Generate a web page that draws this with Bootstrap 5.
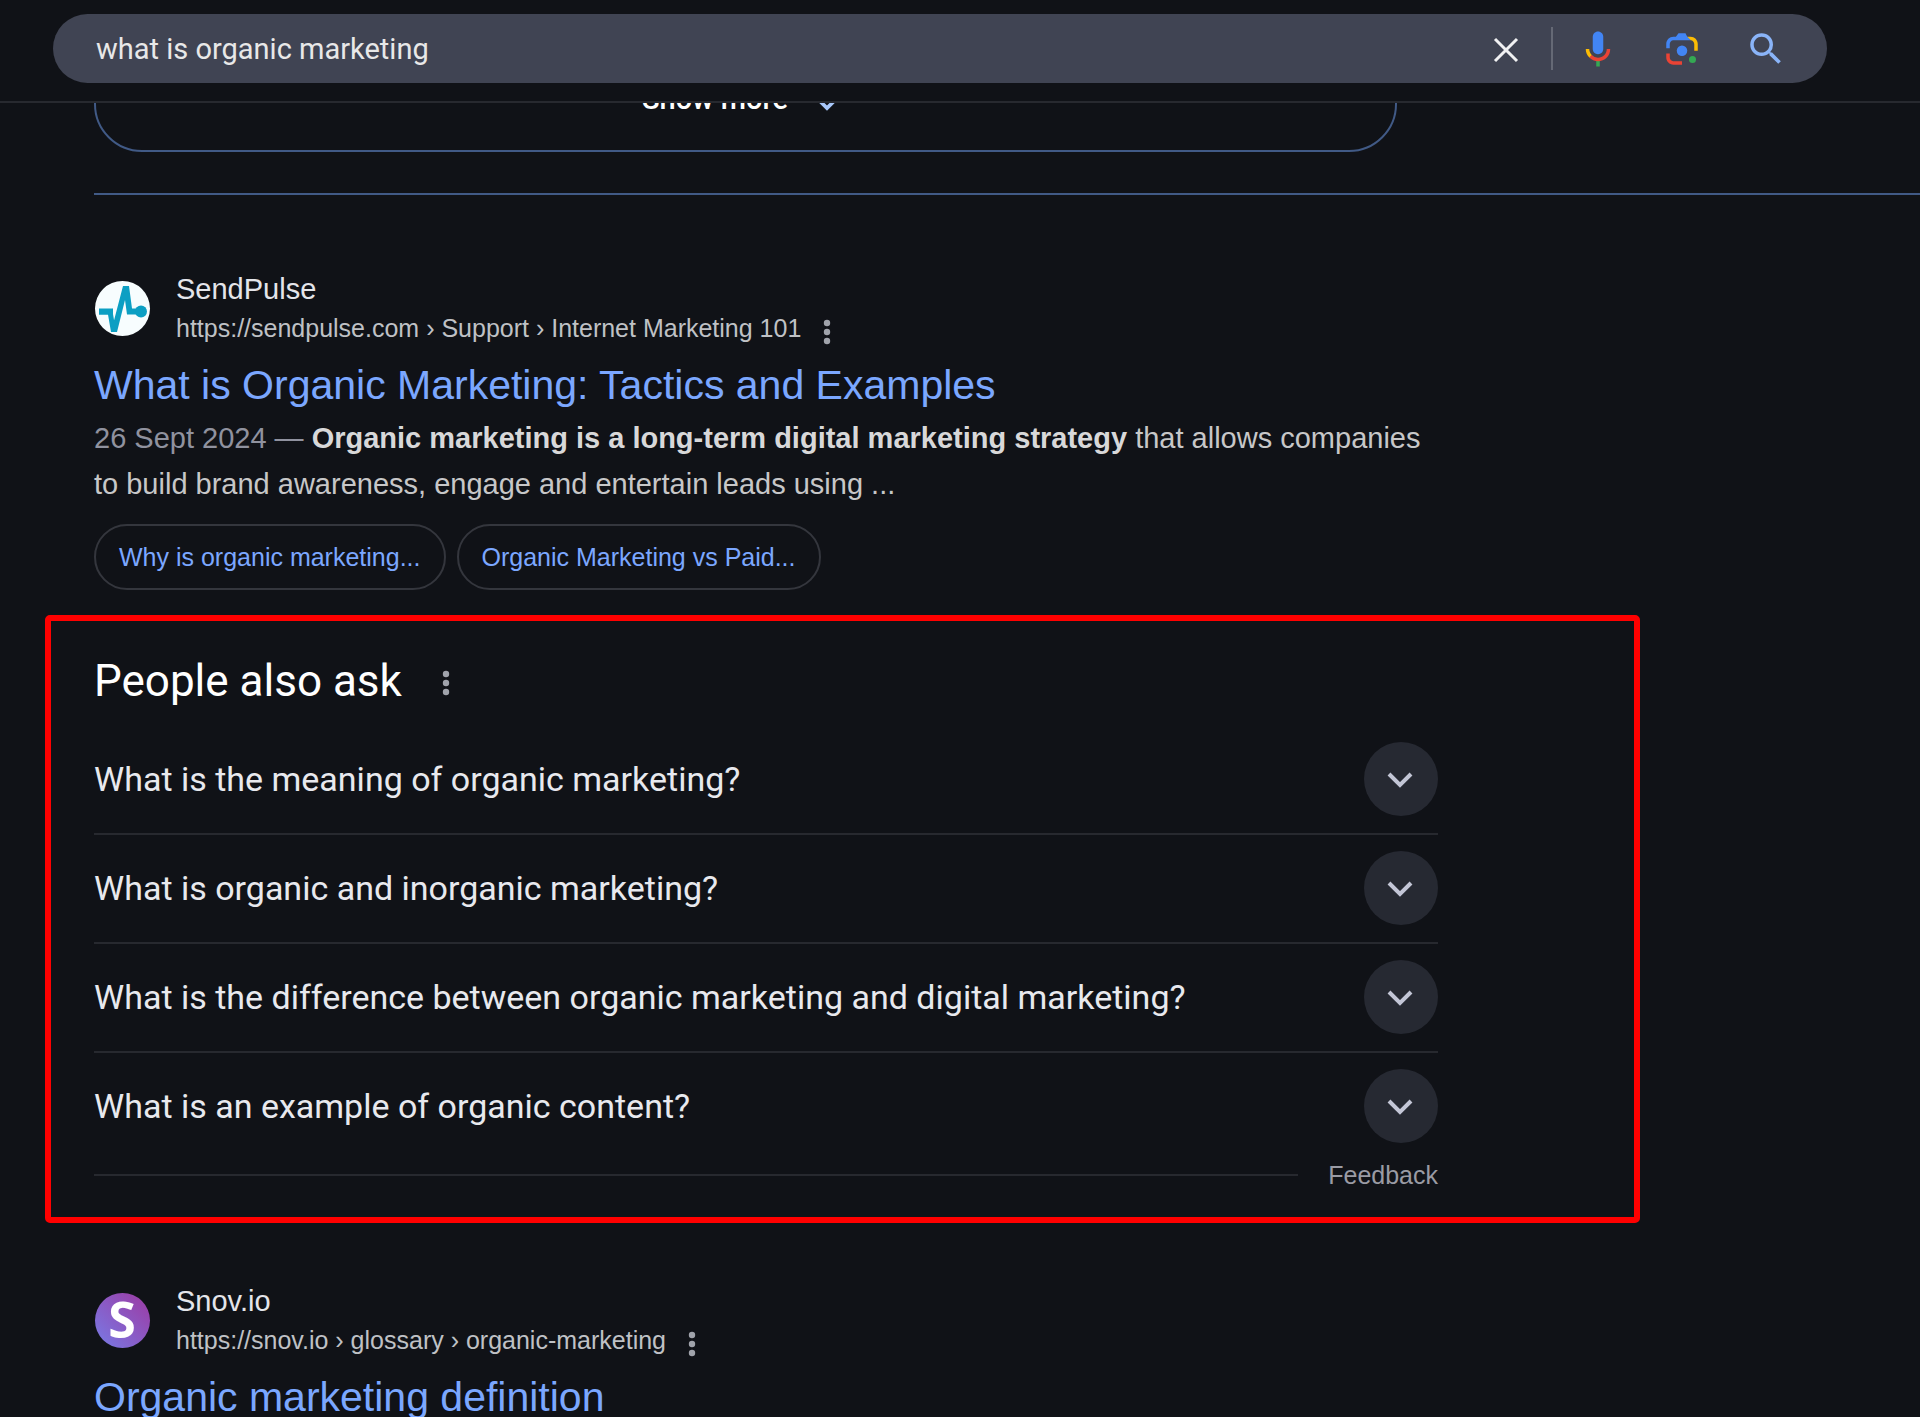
<!DOCTYPE html>
<html lang="en" data-bs-theme="dark">
<head>
<meta charset="utf-8">
<meta name="viewport" content="width=device-width, initial-scale=1">
<title>what is organic marketing - Search</title>
<link href="https://cdn.jsdelivr.net/npm/bootstrap@5.3.0/dist/css/bootstrap.min.css" rel="stylesheet">
<style>
  :root { --page: #101217; --line: #27292f; --blue-line: #415a86; --gutter: 94px; --display: Roboto, "Liberation Sans", sans-serif; }
  body { background: var(--page); color: #e8e8e8; font-family: "Liberation Sans", Arial, sans-serif; font-size: 29px; line-height: 46px; }
  .icon-btn { padding: 0; border: 0; background: none; line-height: 0; color: inherit; }
  .topbar { z-index: 2; background: var(--page); border-bottom: 2px solid var(--line); padding: 14px 93px 18px 53px; }
  .search-pill { height: 69px; background: #404453; padding: 0 40px 0 43px; }
  .search-pill input { font: 29px/40px var(--display); color: #e8e8e8; background: none; border: 0; outline: 0; min-width: 0; }
  .pill-tools { gap: 42px; }
  .pill-clear { gap: 24px; margin-right: 24px; }
  .pill-rule { width: 2px; height: 43px; background: #656975; }
  .content-area { padding-left: var(--gutter); }
  .more-card { max-width: 1303px; height: 99px; margin-top: -50px; border: 2px solid var(--blue-line); border-radius: 48px; padding: 21px 10px 0 0; }
  .more-btn { font: 500 29px/46px var(--display); color: #fff; border: 0; background: none; padding: 0; gap: 27px; }
  .section-rule { height: 2px; background: var(--blue-line); margin-top: 41px; }
  .column-main { max-width: 1344px; }
  .result { padding-top: 74px; }
  .result-next { padding-top: 58px; }
  .source { gap: 25px; }
  .source-name { line-height: 40px; color: #e4e5ea; }
  .source-url { font-size: 25px; line-height: 38px; color: #bfc1c5; gap: 18px; }
  .result-title { font-size: 41px; line-height: 54px; margin: 11px 0 3px; font-weight: 400; }
  .result-title a, .chip { color: #7ba7ff; text-decoration: none; }
  .snippet { color: #c7c7c8; margin: 0; }
  .snippet-date { color: #90929f; }
  .snippet b { color: #d8d8d9; }
  .chips { gap: 11px; margin-top: 17px; }
  .chip { font-size: 25px; line-height: 62px; border: 2px solid #34363d; padding: 0 23px; }
  .ask-box { max-width: 1595px; margin: 25px 0 0 -49px; border: 6px solid #f00; border-radius: 5px; padding: 26px 196px 23px 43px; }
  .ask-title { font: 400 44px/68px var(--display); margin: 0 0 27px; gap: 36px; }
  .question { font: 400 34px/44px var(--display); color: #e8e9ee; padding: 0 0 17px; margin-bottom: 16px; border-bottom: 2px solid var(--line); }
  .question:last-of-type { border-bottom: 0; padding: 0; margin: 0; }
  .expand { width: 74px; height: 74px; padding: 2px 2px 0 0; background: #262932; color: #c3c6d6; }
  .feedback { font-size: 25px; line-height: 38px; margin-top: 13px; gap: 30px; }
  .feedback hr { height: 2px; margin: 0; border: 0; background: var(--line); opacity: 1; }
  .feedback a { color: #9a9ba4; text-decoration: none; }
  .dots { color: #a0a3ab; }
  .snov-letter { font: 700 50px "Open Sans", sans-serif; }
</style>
</head>
<body class="vh-100 overflow-hidden">
<svg width="0" height="0" class="d-none" aria-hidden="true">
  <symbol id="i-dots" viewBox="0 0 8 26"><g fill="currentColor"><circle cx="4" cy="4" r="3.2"/><circle cx="4" cy="13" r="3.2"/><circle cx="4" cy="22" r="3.2"/></g></symbol>
  <symbol id="i-down" viewBox="0 0 26 16"><path d="M2 2l11 11L24 2" fill="none" stroke="currentColor" stroke-width="4"/></symbol>
</svg>

<header class="topbar position-relative">
  <form class="search-pill rounded-pill d-flex align-items-center" role="search" onsubmit="return false">
    <input class="flex-grow-1 p-0" type="text" value="what is organic marketing" aria-label="Search">
    <div class="pill-clear d-flex align-items-center">
      <button class="icon-btn" type="reset" aria-label="Clear"><svg width="42" height="42" viewBox="0 0 42 42"><path d="M10 11l22 22M32 11l-22 22" stroke="#f1f1f3" stroke-width="3" fill="none"/></svg></button>
      <span class="pill-rule"></span>
    </div>
    <div class="pill-tools d-flex align-items-center">
      <button class="icon-btn" type="button" aria-label="Search by voice"><svg width="42" height="42" viewBox="0 0 24 24"><path fill="#4285f4" d="m12 15c1.660 0 3-1.310 3-2.970v-7.020c0-1.660-1.340-3.010-3-3.010s-3 1.340-3 3.010v7.020c0 1.660 1.340 2.970 3 2.970z"/><path fill="#34a853" d="m11 18.080h2v3.920h-2z"/><path fill="#fbbc04" d="m7.050 16.870c-1.270-1.330-2.050-2.830-2.050-4.870h2c0 1.450.56 2.420 1.470 3.380v.32l-1.150 1.180z"/><path fill="#ea4335" d="m12 16.930a4.970 5.250 0 0 1-3.540-1.550l-1.410 1.490c1.260 1.340 3.020 2.130 4.950 2.130 3.870 0 6.990-2.920 6.990-7h-1.990c0 2.920-2.240 4.930-5 4.930z"/></svg></button>
      <button class="icon-btn" type="button" aria-label="Search by image"><svg width="42" height="42" viewBox="0 0 192 192"><circle fill="#34a853" cx="144" cy="144" r="16"/><circle fill="#4285f4" cx="96" cy="104" r="24"/><path fill="#ea4335" d="M24 135.200c0 18.110 14.690 32.800 32.800 32.800H96v-16l-40.100-.1c-8.800 0-15.900-8.190-15.900-17.900v-18H24z"/><path fill="#fbbc04" d="M168 72.800c0-18.110-14.690-32.800-32.800-32.800H116l20 16c8.800 0 16 8.290 16 18v30h16z"/><path fill="#4285f4" d="M112 24H80L68 40H56.800C38.690 40 24 54.690 24 72.800V92h16V74c0-9.710 7.200-18 16-18h80l-16-16z"/></svg></button>
      <button class="icon-btn" type="submit" aria-label="Search"><svg width="42" height="42" viewBox="0 0 24 24"><path fill="#8ab4f8" d="M15.500 14h-.79l-.28-.27A6.471 6.471 0 0 0 16 9.500 6.500 6.500 0 1 0 9.500 16c1.610 0 3.090-.59 4.230-1.570l.27.28v.79l5 4.990L20.490 19zm-6 0C7.010 14 5 11.990 5 9.500S7.010 5 9.500 5 14 7.010 14 9.500 11.990 14 9.500 14z"/></svg></button>
    </div>
  </form>
</header>

<main class="content-area">
  <div class="more-card d-flex justify-content-center align-items-start">
    <button class="more-btn d-flex align-items-center" type="button">Show more <svg class="mt-2" width="24" height="15" color="#a8c7fa"><use href="#i-down"/></svg></button>
  </div>
  <div class="section-rule"></div>

  <div class="column-main">
    <article class="result">
      <div class="source d-flex align-items-center">
        <svg width="57" height="57" viewBox="0 0 57 57" aria-hidden="true"><circle cx="28.500" cy="28.500" r="27.500" fill="#f7fdfe"/><path d="M5 31h14l-1-3 4 24h-5l-3-17.500H5zM17 52l12-46h6l3 22.500h11v6H33L31 20l-8 32z" fill="#0c9fc3"/><path d="M5 28.500h14v6H5z" fill="#0c9fc3"/><circle cx="47" cy="31.500" r="6" fill="#0c9fc3"/></svg>
        <div>
          <div class="source-name">SendPulse</div>
          <div class="source-url d-flex align-items-center">https://sendpulse.com › Support › Internet Marketing 101
            <button class="icon-btn dots mt-2 px-1" type="button" aria-label="About this result"><svg width="8" height="26"><use href="#i-dots"/></svg></button></div>
        </div>
      </div>
      <h3 class="result-title"><a href="#">What is Organic Marketing: Tactics and Examples</a></h3>
      <p class="snippet"><span class="snippet-date">26 Sept 2024 — </span><b>Organic marketing is a long-term digital marketing strategy</b> that allows companies to build brand awareness, engage and entertain leads using ...</p>
      <div class="chips d-flex">
        <a class="chip rounded-pill" href="#">Why is organic marketing...</a>
        <a class="chip rounded-pill" href="#">Organic Marketing vs Paid...</a>
      </div>
    </article>
  </div>

  <section class="ask-box">
    <h2 class="ask-title d-flex align-items-center">People also ask
      <button class="icon-btn dots px-1 pt-1" type="button" aria-label="About this section"><svg width="8" height="26"><use href="#i-dots"/></svg></button></h2>
    <div class="question d-flex align-items-center justify-content-between">What is the meaning of organic marketing?
      <button class="icon-btn expand rounded-circle" type="button" aria-label="Expand"><svg width="26" height="16"><use href="#i-down"/></svg></button></div>
    <div class="question d-flex align-items-center justify-content-between">What is organic and inorganic marketing?
      <button class="icon-btn expand rounded-circle" type="button" aria-label="Expand"><svg width="26" height="16"><use href="#i-down"/></svg></button></div>
    <div class="question d-flex align-items-center justify-content-between">What is the difference between organic marketing and digital marketing?
      <button class="icon-btn expand rounded-circle" type="button" aria-label="Expand"><svg width="26" height="16"><use href="#i-down"/></svg></button></div>
    <div class="question d-flex align-items-center justify-content-between">What is an example of organic content?
      <button class="icon-btn expand rounded-circle" type="button" aria-label="Expand"><svg width="26" height="16"><use href="#i-down"/></svg></button></div>
    <footer class="feedback d-flex align-items-center"><hr class="flex-grow-1"><a href="#">Feedback</a></footer>
  </section>

  <div class="column-main">
    <article class="result result-next">
      <div class="source d-flex align-items-center">
        <svg width="57" height="57" viewBox="0 0 57 57" aria-hidden="true"><defs><linearGradient id="snov" x1="0" y1="1" x2="1" y2="0"><stop offset=".1" stop-color="#7b75e0"/><stop offset=".9" stop-color="#9a3fa8"/></linearGradient></defs><circle cx="28.500" cy="28.500" r="27.500" fill="url(#snov)"/><text class="snov-letter" x="28" y="46" text-anchor="middle" fill="#fff">S</text></svg>
        <div>
          <div class="source-name">Snov.io</div>
          <div class="source-url d-flex align-items-center">https://snov.io › glossary › organic-marketing
            <button class="icon-btn dots mt-2 px-1" type="button" aria-label="About this result"><svg width="8" height="26"><use href="#i-dots"/></svg></button></div>
        </div>
      </div>
      <h3 class="result-title"><a href="#">Organic marketing definition</a></h3>
    </article>
  </div>
</main>
<script src="https://cdn.jsdelivr.net/npm/bootstrap@5.3.0/dist/js/bootstrap.bundle.min.js"></script>
</body>
</html>
